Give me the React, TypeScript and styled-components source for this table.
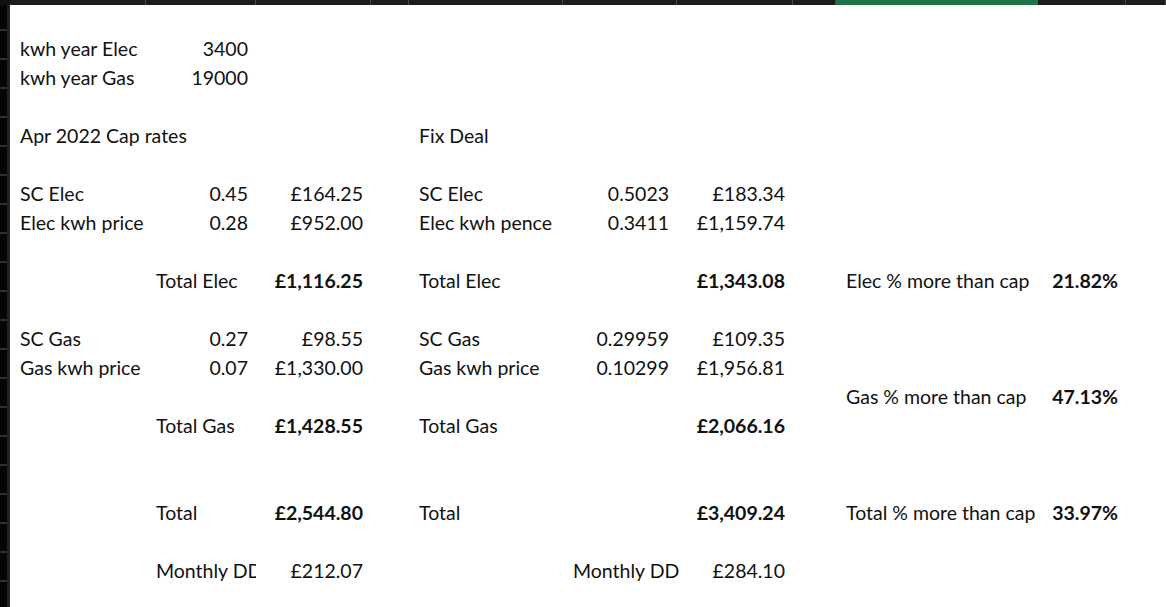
import styled, { createGlobalStyle } from "styled-components";

const GlobalStyle = createGlobalStyle`
  html, body {
    margin: 0;
    padding: 0;
    background: #ffffff;
  }
  body {
    font-family: Lato, "Open Sans", sans-serif;
    color: #111111;
  }
`;

const COLUMNS = "136px 110px 115px 38px 154px 114px 116px 43px 202px 88px 1fr";
const ACTIVE_COL = 9;
const ROW_COUNT = 20;

type CellData = {
  col: number;
  text: string;
  right?: boolean;
  bold?: boolean;
  clip?: boolean;
};

// sparse sheet: row index -> cells
const SheetRows: Record<number, CellData[]> = {
  0: [
    { col: 1, text: "kwh year Elec" },
    { col: 2, text: "3400", right: true },
  ],
  1: [
    { col: 1, text: "kwh year Gas" },
    { col: 2, text: "19000", right: true },
  ],
  3: [
    { col: 1, text: "Apr 2022 Cap rates" },
    { col: 5, text: "Fix Deal" },
  ],
  5: [
    { col: 1, text: "SC Elec" },
    { col: 2, text: "0.45", right: true },
    { col: 3, text: "£164.25", right: true },
    { col: 5, text: "SC Elec" },
    { col: 6, text: "0.5023", right: true },
    { col: 7, text: "£183.34", right: true },
  ],
  6: [
    { col: 1, text: "Elec kwh price" },
    { col: 2, text: "0.28", right: true },
    { col: 3, text: "£952.00", right: true },
    { col: 5, text: "Elec kwh pence" },
    { col: 6, text: "0.3411", right: true },
    { col: 7, text: "£1,159.74", right: true },
  ],
  8: [
    { col: 2, text: "Total Elec" },
    { col: 3, text: "£1,116.25", right: true, bold: true },
    { col: 5, text: "Total Elec" },
    { col: 7, text: "£1,343.08", right: true, bold: true },
    { col: 9, text: "Elec % more than cap" },
    { col: 10, text: "21.82%", right: true, bold: true },
  ],
  10: [
    { col: 1, text: "SC Gas" },
    { col: 2, text: "0.27", right: true },
    { col: 3, text: "£98.55", right: true },
    { col: 5, text: "SC Gas" },
    { col: 6, text: "0.29959", right: true },
    { col: 7, text: "£109.35", right: true },
  ],
  11: [
    { col: 1, text: "Gas kwh price" },
    { col: 2, text: "0.07", right: true },
    { col: 3, text: "£1,330.00", right: true },
    { col: 5, text: "Gas kwh price" },
    { col: 6, text: "0.10299", right: true },
    { col: 7, text: "£1,956.81", right: true },
  ],
  12: [
    { col: 9, text: "Gas % more than cap" },
    { col: 10, text: "47.13%", right: true, bold: true },
  ],
  13: [
    { col: 2, text: "Total Gas" },
    { col: 3, text: "£1,428.55", right: true, bold: true },
    { col: 5, text: "Total Gas" },
    { col: 7, text: "£2,066.16", right: true, bold: true },
  ],
  16: [
    { col: 2, text: "Total" },
    { col: 3, text: "£2,544.80", right: true, bold: true },
    { col: 5, text: "Total" },
    { col: 7, text: "£3,409.24", right: true, bold: true },
    { col: 9, text: "Total % more than cap", clip: true },
    { col: 10, text: "33.97%", right: true, bold: true },
  ],
  18: [
    { col: 2, text: "Monthly DD", clip: true },
    { col: 3, text: "£212.07", right: true },
    { col: 6, text: "Monthly DD" },
    { col: 7, text: "£284.10", right: true },
  ],
};

const Window = styled.div`
  display: grid;
  grid-template-columns: 10px 1fr;
  grid-template-rows: 5px 1fr;
  width: 1166px;
  height: 607px;
  overflow: hidden;
  background: #ffffff;
`;

const Corner = styled.div`
  background: #111111;
`;

const ColumnHeaders = styled.div`
  display: grid;
  grid-template-columns: ${COLUMNS};
  background: #1c1c1c;
`;

const HeaderCell = styled.div<{ $active?: boolean }>`
  background: ${(p) => (p.$active ? "#217346" : "#1c1c1c")};
  border-right: 1px solid ${(p) => (p.$active ? "#217346" : "#4a4a4a")};
`;

const RowGutter = styled.div`
  display: flex;
  flex-direction: column;
  background: #050505;
  border-right: 3px solid #222222;
`;

const GutterCell = styled.div<{ $first?: boolean }>`
  flex: 0 0 ${(p) => (p.$first ? "26px" : "29px")};
  box-sizing: border-box;
  border-bottom: 2px solid #2e2e2e;
`;

const Sheet = styled.div`
  display: flex;
  flex-direction: column;
  padding-top: 26px;
`;

const Row = styled.div`
  display: grid;
  grid-template-columns: ${COLUMNS};
  height: 29px;
`;

const Cell = styled.div<{ $col: number; $right?: boolean; $bold?: boolean; $clip?: boolean }>`
  grid-column: ${(p) => p.$col};
  grid-row: 1;
  box-sizing: border-box;
  height: 29px;
  padding: 8px 8px 0 10px;
  font-size: 19.5px;
  line-height: 20px;
  font-weight: ${(p) => (p.$bold ? 700 : 400)};
  text-align: ${(p) => (p.$right ? "right" : "left")};
  white-space: nowrap;
  overflow: ${(p) => (p.$clip ? "hidden" : "visible")};
  text-overflow: clip;
  ${(p) => (p.$clip ? "padding-right: 0;" : "")}
`;

const App = () => {
  const headers = Array.from({ length: 11 }, (_, i) => i + 1);
  const rows = Array.from({ length: ROW_COUNT }, (_, i) => i);

  return (
    <>
      <GlobalStyle />
      <Window>
        <Corner />
        <ColumnHeaders>
          {headers.map((h) => (
            <HeaderCell key={h} $active={h === ACTIVE_COL} />
          ))}
        </ColumnHeaders>
        <RowGutter>
          <GutterCell $first />
          {rows.map((r) => (
            <GutterCell key={r} />
          ))}
        </RowGutter>
        <Sheet>
          {rows.map((r) => (
            <Row key={r}>
              {(SheetRows[r] || []).map((c) => (
                <Cell
                  key={c.col}
                  $col={c.col}
                  $right={c.right}
                  $bold={c.bold}
                  $clip={c.clip}
                >
                  {c.text}
                </Cell>
              ))}
            </Row>
          ))}
        </Sheet>
      </Window>
    </>
  );
};

export default App;
